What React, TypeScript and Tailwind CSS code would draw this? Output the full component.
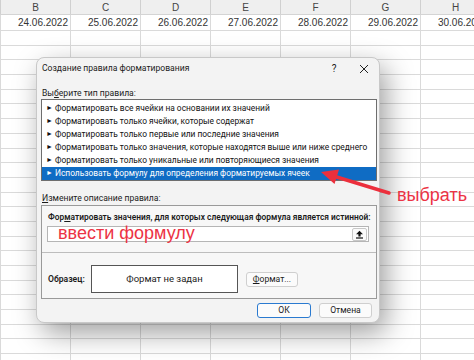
import React from "react";

const cols = ["B", "C", "D", "E", "F", "G", "H"];
const dates = ["24.06.2022", "25.06.2022", "26.06.2022", "27.06.2022", "28.06.2022", "29.06.2022", "30.06.2022"];

function Row({ children, h }: { children?: (i: number) => React.ReactNode; h: string }) {
  return (
    <div className={`flex ${h} border-b border-[#dadada]`}>
      <div className="w-[1px] shrink-0 border-r border-[#dadada]" />
      {cols.map((c, i) => (
        <div key={c} className="w-[70px] shrink-0 border-r border-[#dadada] flex items-center justify-end pr-[2px]">
          {children ? children(i) : null}
        </div>
      ))}
    </div>
  );
}

const listItems = [
  "Форматировать все ячейки на основании их значений",
  "Форматировать только ячейки, которые содержат",
  "Форматировать только первые или последние значения",
  "Форматировать только значения, которые находятся выше или ниже среднего",
  "Форматировать только уникальные или повторяющиеся значения",
  "Использовать формулу для определения форматируемых ячеек",
];

export default function App() {
  const emptyRows = Array.from({ length: 23 });
  return (
    <div
      className="relative w-[474px] h-[360px] overflow-hidden bg-white"
      style={{ fontFamily: 'Roboto, "Noto Sans", sans-serif' }}
    >
      {/* Spreadsheet */}
      <div className="w-[500px]" style={{ fontFamily: '"Liberation Sans", Arial, sans-serif' }}>
        <div className="flex h-[15px] bg-[#efefef] border-b border-[#d4d4d4]">
          <div className="w-[1px] shrink-0 border-r border-[#d0d0d0]" />
          {cols.map((c) => (
            <div key={c} className="w-[70px] shrink-0 border-r border-[#d0d0d0] flex items-center justify-center text-[10px] text-[#444]">
              {c}
            </div>
          ))}
        </div>
        <Row h="h-[16px]">{(i) => <span className="text-[10px] text-[#333]">{dates[i]}</span>}</Row>
        {emptyRows.map((_, k) => (
          <Row key={k} h="h-[14.7px]" />
        ))}
      </div>

      {/* Dialog */}
      <div className="absolute left-[36px] top-[57px] w-[344px] h-[266px] rounded-[8px] bg-[#f3f3f3] border border-[#c8c8c8] shadow-[6px_10px_28px_rgba(0,0,0,0.38)] text-[#1b1b1b] flex flex-col">
        <div className="h-[21px] flex items-center pl-[5px] pr-[10px] text-[8.6px]">
          <span className="flex-1">Создание правила форматирования</span>
          <span className="w-[10px] text-center text-[10px] mr-[20px]">?</span>
          <svg width="10" height="10" viewBox="0 0 10 10">
            <path d="M1 1 L9 9 M9 1 L1 9" stroke="#222" strokeWidth="1" />
          </svg>
        </div>
        <div className="mt-[8px] h-[12px] pl-[5px] flex items-center text-[8.6px]">
          <span>
            Вы<span className="underline">б</span>ерите тип правила:
          </span>
        </div>
        <div className="ml-[4px] w-[336px] h-[82px] border border-[#6e6e6e] bg-white pt-[2px]">
          {listItems.map((t, i) => (
            <div
              key={i}
              className={`h-[13px] flex items-center pl-[4px] text-[8.4px] whitespace-nowrap overflow-hidden ${
                i === 5 ? "bg-[#0f6cc4] text-white" : "text-[#111]"
              }`}
            >
              <span className="mr-[2px] text-[7px]">►</span>
              {t}
            </div>
          ))}
        </div>
        <div className="mt-[11px] h-[12px] pl-[5px] flex items-center text-[8.6px]">
          <span>
            <span className="underline">И</span>змените описание правила:
          </span>
        </div>
        <div className="mt-[1px] ml-[4px] w-[336px] h-[94px] border border-[#9a9a9a] bg-[#f7f7f7] flex flex-col">
          <div className="mt-[5px] h-[12px] pl-[6px] flex items-center text-[8.4px] font-semibold whitespace-nowrap">
            <span>
              Фор<span className="underline">м</span>атировать значения, для которых следующая формула является истинной:
            </span>
          </div>
          <div className="mt-[3px] ml-[5px] w-[322px] h-[16px] border border-[#b5b5b5] bg-white flex items-center justify-end pr-[1px]">
            <div className="w-[15px] h-[13px] border border-[#c8c8c8] bg-[#fbfbfb] rounded-[2px] flex items-center justify-center">
              <svg width="9" height="9" viewBox="0 0 9 9">
                <path d="M4.5 0.8 L8 4.3 H5.6 V6.6 H3.4 V4.3 H1 Z" fill="#111" />
                <rect x="1" y="7.4" width="7" height="1.2" fill="#111" />
              </svg>
            </div>
          </div>
          <div className="mt-[10px] h-[1px] bg-[#bdbdbd]" />
          <div className="mt-[12px] flex items-center">
            <span className="ml-[6px] w-[43px] text-[8.6px] font-semibold">Образец:</span>
            <div className="w-[147px] h-[28px] border border-[#555] bg-white flex items-center justify-center text-[9.5px]">
              Формат не задан
            </div>
            <div className="ml-[8px] w-[52px] h-[15px] border border-[#cfcfcf] rounded-[3px] bg-[#fbfbfb] flex items-center justify-center text-[8.6px]">
              <span>
                <span className="underline">Ф</span>ормат...
              </span>
            </div>
          </div>
        </div>
        <div className="mt-[4px] flex justify-end pr-[7px] gap-[8px]">
          <div className="w-[54px] h-[15px] border border-[#2a7ad0] rounded-[3px] bg-[#fbfbfb] flex items-center justify-center text-[8.6px]">
            ОК
          </div>
          <div className="w-[53px] h-[15px] border border-[#cfcfcf] rounded-[3px] bg-[#fbfbfb] flex items-center justify-center text-[8.6px]">
            Отмена
          </div>
        </div>
      </div>

      {/* Annotations */}
      <div
        className="absolute left-[58px] top-[223px] text-[18px] leading-[20px] text-[#ec3345] whitespace-nowrap"
        style={{ fontFamily: '"Liberation Sans", Arial, sans-serif' }}
      >
        ввести формулу
      </div>
      <div
        className="absolute left-[397px] top-[185px] text-[18px] leading-[20px] text-[#ec3345] whitespace-nowrap"
        style={{ fontFamily: '"Liberation Sans", Arial, sans-serif' }}
      >
        выбрать
      </div>
      <svg className="absolute left-0 top-0" width="474" height="360" viewBox="0 0 474 360">
        <line x1="389" y1="193" x2="335" y2="176.5" stroke="#ec2f3c" strokeWidth="3.5" strokeLinecap="round" />
        <polygon points="321,172 339,169.5 334.5,184" fill="#ec2f3c" />
      </svg>
    </div>
  );
}
